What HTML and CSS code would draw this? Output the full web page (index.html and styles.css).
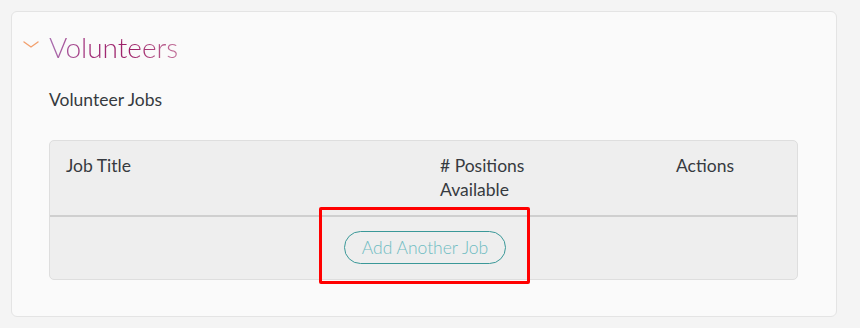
FILE: index.html
```html
<!DOCTYPE html>
<html lang="en">
<head>
    <meta charset="UTF-8">
    <meta name="viewport" content="width=device-width, initial-scale=1.0">
    <title>Volunteers</title>
    <link rel="stylesheet" href="styles.css">
</head>
<body>

    <div class="card">
        <div class="section-head">
            <svg class="chevron" width="16" height="8" viewBox="0 0 16 8">
                <path d="M1 1 L8 6 L15 1" fill="none" stroke="#f2a06e" stroke-width="1.4" stroke-linecap="round"/>
            </svg>
            <h2>Volunteers</h2>
        </div>

        <p class="label">Volunteer Jobs</p>

        <div class="jobs">
            <div class="jobs-head">
                <div class="col col-title">Job Title</div>
                <div class="col col-positions"># Positions<br>Available</div>
                <div class="col col-actions">Actions</div>
            </div>
            <div class="jobs-body">
                <div class="add-wrap">
                    <button class="add-job">Add Another Job</button>
                    <span class="highlight"></span>
                </div>
            </div>
        </div>
    </div>

</body>
</html>
```

FILE: styles.css
```css
body {
    font-family: Lato, "Liberation Sans", sans-serif;
    background-color: #f4f4f4;
    margin: 0;
    padding: 11px;
    color: #363a40;
}

.card {
    background: #fafafa;
    border: 1px solid #e4e4e4;
    border-radius: 6px;
    box-sizing: border-box;
    width: 826px;
    height: 306px;
    padding: 16px 38px 0 37px;
}

.section-head {
    display: flex;
    align-items: center;
    margin-left: -26px;
}

.chevron {
    margin-right: 10px;
    margin-top: -4px;
}

h2 {
    margin: 0;
    font-size: 28px;
    font-weight: 300;
    line-height: 38px;
    background: linear-gradient(90deg, #a96fb0 0%, #a2307a 30%, #9c1f66 65%, #c2729a 100%);
    -webkit-background-clip: text;
    background-clip: text;
    color: transparent;
}

.label {
    margin: 22px 0 0;
    font-size: 17.5px;
    line-height: 24px;
}

.jobs {
    margin-top: 28px;
    background: #eeeeee;
    border: 1px solid #dedede;
    border-radius: 5px;
    font-size: 17.5px;
    line-height: 24px;
}

.jobs-head {
    display: flex;
    padding: 13px 0 13px;
    border-bottom: 2px solid #cfcfcf;
}

.col {
    padding-left: 16px;
    box-sizing: border-box;
}

.col-title { width: 374px; }
.col-positions { width: 236px; }
.col-actions { flex: 1; }

.jobs-body {
    display: flex;
    justify-content: center;
    padding: 14px 0 15px 3px;
}

.add-wrap {
    position: relative;
}

.add-job {
    font-family: Lato, "Liberation Sans", sans-serif;
    font-size: 17.5px;
    font-weight: 300;
    color: #6fbcc2;
    background: transparent;
    border: 1px solid #3a9898;
    border-radius: 17px;
    height: 33px;
    padding: 0 17px;
    cursor: pointer;
}

.highlight {
    position: absolute;
    left: -25px;
    top: -24px;
    right: -24px;
    bottom: -20px;
    border: 3px solid #ff0000;
    border-radius: 2px;
}
```
